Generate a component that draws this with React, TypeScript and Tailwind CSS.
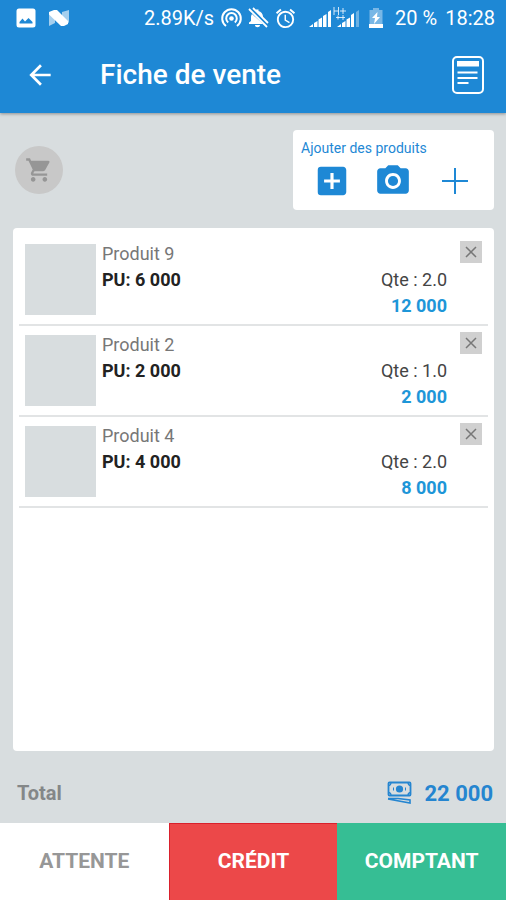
import { useState } from 'react';
import { MdAddBox, MdAlarm, MdArrowBack, MdCameraAlt, MdShoppingCart } from 'react-icons/md';

interface Produit {
  id: number;
  nom: string;
  prix: number;
  quantite: number;
}

const PRODUITS: Produit[] = [
  { id: 9, nom: 'Produit 9', prix: 6000, quantite: 2 },
  { id: 2, nom: 'Produit 2', prix: 2000, quantite: 1 },
  { id: 4, nom: 'Produit 4', prix: 4000, quantite: 2 },
];

const formatMontant = (n: number) => String(n).replace(/\B(?=(\d{3})+$)/g, ' ');

function ImageIcon() {
  return (
    <svg width="20" height="20" viewBox="0 0 20 20" aria-hidden="true">
      <rect x="0.5" y="0.5" width="19" height="19" rx="2.5" fill="#fff" />
      <path d="M3.500 15.500v-1.500l3-3.500 2.500 3 3.500-3.500 4 4v1.500z" fill="#1e88d5" />
    </svg>
  );
}

function NougatIcon() {
  return (
    <svg width="22" height="18" viewBox="0 0 22 18" aria-hidden="true">
      <path d="M1 4l6 4v6l-6 3zM14 3l7-2v13l-7-5z" fill="#fff" opacity="0.6" />
      <path d="M1 3l5-2h3l11 11v3l-4 2h-3L1 5.500z" fill="#fff" />
    </svg>
  );
}

function HotspotIcon() {
  return (
    <svg width="23" height="22" viewBox="0 0 23 22" fill="none" stroke="#fff" strokeWidth="2" aria-hidden="true">
      <path d="M6 19A9.300 9.300 0 1 1 17 19" />
      <path d="M8.200 15.500A5.300 5.300 0 1 1 14.800 15.500" />
      <circle cx="11.500" cy="11.500" r="2.300" fill="#fff" stroke="none" />
    </svg>
  );
}

function BellOffIcon() {
  return (
    <svg width="23" height="22" viewBox="0 0 23 22" fill="#fff" aria-hidden="true">
      <path d="M5 7l11 10H2v-1.500L4 14v-4c0-1 .3-2 1-3zM8 18h5c0 3-5 3-5 0zM9 4V2.500h2.500V4c2.500.700 4.500 3 4.500 5.500v2z" />
      <path d="M2 2l18 18M6 1l15 15" fill="none" stroke="#fff" strokeWidth="1.800" />
    </svg>
  );
}

function SignalIcon() {
  return (
    <svg width="52" height="24" viewBox="0 0 52 24" fill="#fff" aria-hidden="true">
      <path d="M0 21l4-3v3zM5 17l3.500-2v6H5zM9.500 13.500l3.500-2V21H9.500zM14 10l3.500-2v13H14zM19 6l3-2v17h-3z" />
      <path d="M28 21l4-3v3zM33 17l3.500-2v6H33zM37.500 13.500l3.500-2V21h-3.500zM42 9l3-2v14h-3z" />
      <path d="M47 6l3-2v17h-3z" opacity="0.35" />
      <path d="M25 1v8M29.500 1v8M25 5h4.500M31 5h6M34 2v6M27 11.500h9M29 9.500v4M34 9v5" fill="none" stroke="#fff" strokeWidth="1" opacity="0.8" />
    </svg>
  );
}

function BatteryIcon() {
  return (
    <svg width="14" height="20" viewBox="0 0 14 20" aria-hidden="true">
      <path d="M4 0h6v2h3.500v14H.5V2H4z" fill="#fff" opacity="0.4" />
      <path d="M0 16h14v4H0zM8.500 4L3 10h3l-1 6 6-7H8z" fill="#fff" />
    </svg>
  );
}

function FicheIcon() {
  return (
    <svg width="32" height="38" viewBox="0 0 32 38" fill="none" stroke="#fff" aria-hidden="true">
      <rect x="1" y="1" width="30" height="36" rx="4" strokeWidth="2" />
      <path d="M5 5h22v5.500H5z" fill="#fff" stroke="none" />
      <path d="M5.500 16.500h20M5.500 22h20M5.500 27h11" strokeWidth="2" />
    </svg>
  );
}

function BilletIcon() {
  return (
    <svg width="25" height="24" viewBox="0 0 25 24" fill="none" stroke="#2585d0" aria-hidden="true">
      <rect x="1.500" y="1.500" width="22" height="13" rx="1" strokeWidth="1.800" />
      <path d="M1 4.500q3 0 3-3M24 4.500q-3 0-3-3M1 11.500q3 0 3 3M24 11.500q-3 0-3 3" strokeWidth="1.300" />
      <path d="M6.500 6.500v3M18.500 6.500v3" strokeWidth="1" />
      <circle cx="12.500" cy="8" r="3.600" fill="#2585d0" stroke="none" />
      <path d="M1 17.500h10l12 1.500v3L1 18" strokeWidth="1.600" />
    </svg>
  );
}

export default function App() {
  const [produits, setProduits] = useState<Produit[]>(PRODUITS);

  const total = produits.reduce((somme, p) => somme + p.prix * p.quantite, 0);

  const supprimer = (id: number) => {
    setProduits((prev) => prev.filter((p) => p.id !== id));
  };

  return (
    <div className="flex min-h-screen flex-col bg-[#d8dddf] font-['Roboto',sans-serif]">
      <header className="bg-[#1e88d5] text-white shadow-[0_1px_3px_rgba(0,0,0,0.35)]">
        <div className="flex h-9 items-center justify-between pl-4 pr-[11px] text-xl">
          <div className="flex items-center gap-3">
            <ImageIcon />
            <NougatIcon />
          </div>
          <div className="flex items-center">
            <span>2.89K/s</span>
            <div className="mr-3 ml-1.5 flex gap-1">
              <HotspotIcon />
              <BellOffIcon />
              <MdAlarm size={23} />
            </div>
            <SignalIcon />
            <div className="mx-2">
              <BatteryIcon />
            </div>
            <span className="ml-1">20 %</span>
            <span className="ml-2">18:28</span>
          </div>
        </div>
        <div className="flex h-[77px] items-center pr-[22px] pl-6">
          <button aria-label="Retour" className="w-8">
            <MdArrowBack size={32} />
          </button>
          <h1 className="ml-11 flex-1 text-[28px] font-medium">Fiche de vente</h1>
          <button aria-label="Fiche">
            <FicheIcon />
          </button>
        </div>
      </header>

      <main className="flex flex-1 flex-col pr-3 pl-[13px]">
        <div className="flex items-center justify-between pt-[17px] pb-[18px]">
          <div className="ml-0.5 flex size-12 items-center justify-center rounded-full bg-[#c8c8c8] text-[#969696]">
            <MdShoppingCart size={28} />
          </div>
          <section className="h-20 w-[201px] rounded bg-white px-2 pt-2 text-[#1e88d5]">
            <h2 className="text-sm leading-5">Ajouter des produits</h2>
            <div className="mt-1 grid grid-cols-3 place-items-center">
              <button aria-label="Ajouter un produit">
                <MdAddBox size={38} />
              </button>
              <button aria-label="Scanner un produit">
                <MdCameraAlt size={38} />
              </button>
              <button aria-label="Nouveau produit">
                <svg width="28" height="28" viewBox="0 0 28 28" stroke="currentColor" strokeWidth="2">
                  <path d="M14 1v26M1 14h26" />
                </svg>
              </button>
            </div>
          </section>
        </div>

        <ul className="flex-1 rounded bg-white px-1.5 pt-[7px]">
          {produits.map((p) => (
            <li key={p.id} className="flex border-b-2 border-[#e2e4e5] px-1.5 pt-1.5 pb-1 text-lg leading-[26px]">
              <div className="mt-[3px] size-[71px] bg-[#d8dddf]" />
              <div className="ml-1.5 flex-1">
                <p className="text-[#777]">{p.nom}</p>
                <p className="font-bold text-[#222]">PU: {formatMontant(p.prix)}</p>
              </div>
              <div className="pt-[26px] pb-px text-right">
                <p className="text-[#444]">Qte : {p.quantite.toFixed(1)}</p>
                <p className="font-bold text-[#1e96d8]">{formatMontant(p.prix * p.quantite)}</p>
              </div>
              <button
                aria-label={`Supprimer ${p.nom}`}
                onClick={() => supprimer(p.id)}
                className="ml-[13px] flex size-[22px] items-center justify-center bg-[#d0d0d0] text-[#777]"
              >
                <svg width="12" height="12" viewBox="0 0 12 12" stroke="currentColor" strokeWidth="1.5">
                  <path d="M1 1l10 10M11 1L1 11" />
                </svg>
              </button>
            </li>
          ))}
        </ul>

        <div className="flex h-[72px] items-center justify-between pt-3 pr-px pl-1">
          <span className="text-xl font-bold text-[#848788]">Total</span>
          <div className="flex items-center gap-3">
            <BilletIcon />
            <span className="text-[22px] font-bold text-[#2585d0]">{formatMontant(total)}</span>
          </div>
        </div>
      </main>

      <footer className="grid h-[77px] grid-cols-3 text-[21px] font-bold">
        <button className="bg-white text-[#979797]">ATTENTE</button>
        <button className="border-t border-l border-[#d9202c] bg-[#ec4849] text-white">CRÉDIT</button>
        <button className="bg-[#36be94] text-white">COMPTANT</button>
      </footer>
    </div>
  );
}
